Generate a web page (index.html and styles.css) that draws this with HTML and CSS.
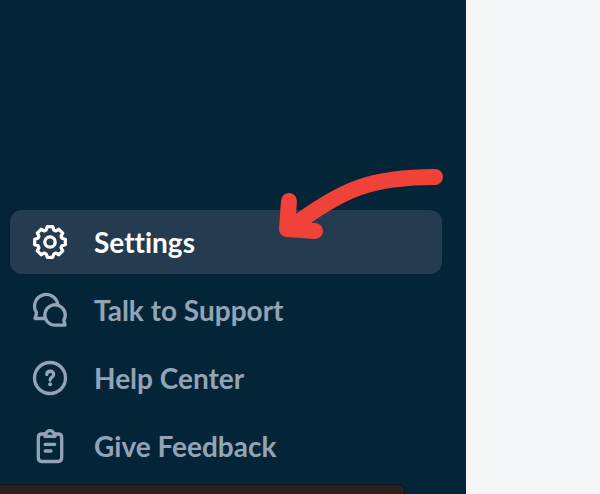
FILE: index.html
```html
<!DOCTYPE html>
<html lang="en">
<head>
<meta charset="utf-8">
<title>Settings menu</title>
<link rel="stylesheet" href="styles.css">
</head>
<body>
<aside class="sidebar">
  <nav class="menu">
    <a class="item active">
      <svg class="icon" viewBox="0 0 40 40"><g transform="translate(20 20)"><path d="M-2.7-15.3H2.7L3.8-11.9L5.7-11.1L8.9-12.7L12.7-8.9L11.1-5.7L11.9-3.8L15.3-2.7V2.7L11.9 3.8L11.1 5.7L12.7 8.9L8.9 12.7L5.7 11.1L3.8 11.9L2.7 15.3H-2.7L-3.8 11.9L-5.7 11.1L-8.9 12.7L-12.7 8.9L-11.1 5.7L-11.9 3.8L-15.3 2.7V-2.7L-11.9-3.8L-11.1-5.7L-12.7-8.9L-8.9-12.7L-5.7-11.1L-3.8-11.9Z"/><circle r="5.2"/></g></svg>
      <span>Settings</span>
    </a>
    <a class="item">
      <svg class="icon" viewBox="0 0 40 40"><path d="M27.8 14.2A11.7 11.7 0 1 0 6.6 22.8L5 28.5H14.5"/><path d="M25 35.2A10.2 10.2 0 1 1 33.8 30.2L35 35.2Z"/></svg>
      <span>Talk to Support</span>
    </a>
    <a class="item">
      <svg class="icon" viewBox="0 0 40 40"><circle cx="20" cy="20" r="15.5"/><path d="M16.8 16.5C16.9 12.2 23.6 12.2 23.6 16.4C23.6 19.4 20.1 18.8 20.1 22"/><circle class="dot" cx="20.1" cy="26.3" r="2"/></svg>
      <span>Help Center</span>
    </a>
    <a class="item">
      <svg class="icon" viewBox="0 0 40 40"><path d="M14.5 8H12Q8.3 8 8.3 11.7V31.8Q8.3 35.5 12 35.5H28Q31.7 35.5 31.7 31.8V11.7Q31.7 8 28 8H25.5M15.2 18.4H24.7M15.2 25H21"/><path d="M15 10.4V9.3Q15 7.5 16.5 7.1Q17.2 4.6 20 4.6T23.5 7.1Q25 7.5 25 9.3V10.4Z"/></svg>
      <span>Give Feedback</span>
    </a>
  </nav>
  <div class="dock"></div>
</aside>
<svg class="arrow" viewBox="0 0 600 494"><path d="M435 177C374 177 344 187 289 229M289 201L287 229L315 231"/></svg>
</body>
</html>
```
FILE: styles.css
```css
* { box-sizing: border-box; }
body {
  margin: 0;
  height: 494px;
  overflow: hidden;
  background: #f4f6f8;
  font-family: Lato, "Liberation Sans", sans-serif;
}
.sidebar {
  display: flex;
  flex-direction: column;
  justify-content: flex-end;
  width: 466px;
  height: 494px;
  background: #042438;
}
.menu {
  display: flex;
  flex-direction: column;
  gap: 4px;
  padding: 0 24px 6px 10px;
}
.item {
  display: flex;
  align-items: center;
  gap: 24px;
  height: 64px;
  padding-left: 20px;
  border-radius: 12px;
  color: #92a4b5;
  font-size: 28px;
  font-weight: 700;
  line-height: 34px;
  white-space: nowrap;
  font-variant-ligatures: none;
}
.active {
  background: #243b50;
  color: #fff;
}
.icon {
  width: 40px;
  height: 40px;
  fill: none;
  stroke: currentColor;
  stroke-width: 3.3;
  stroke-linecap: round;
  stroke-linejoin: round;
}
.dot {
  fill: currentColor;
  stroke: none;
}
.dock {
  width: 405px;
  height: 10px;
  flex-shrink: 0;
  border-top: 1px solid #091820;
  border-right: 1px solid #091820;
  border-top-right-radius: 7px;
  background: #2b2018;
}
.arrow {
  position: absolute;
  top: 0;
  left: 0;
  width: 600px;
  height: 494px;
  fill: none;
  stroke: #f04238;
  stroke-width: 16;
  stroke-linecap: round;
  stroke-linejoin: round;
}
```
